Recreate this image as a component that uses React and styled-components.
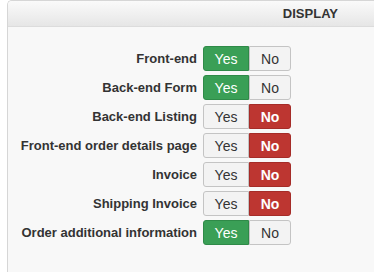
import React from 'react'
import styled, { createGlobalStyle } from 'styled-components'

const GlobalStyle = createGlobalStyle`
  html, body {
    margin: 0;
    padding: 0;
    background: #fff;
    overflow: hidden;
  }
  body {
    font-family: "Liberation Sans", Arial, sans-serif;
    color: #333;
  }
`

const Panel = styled.div`
  margin-left: 7px;
  margin-right: -12px;
  height: 272px;
  border: 1px solid #d6d6d6;
  border-right: none;
  border-bottom: none;
  border-top-left-radius: 5px;
  background: #f8f8f8;
  overflow: hidden;
`

const Header = styled.div`
  display: flex;
  justify-content: flex-end;
  align-items: center;
  height: 25px;
  padding-right: 48px;
  background: linear-gradient(to bottom, #fafafa, #e6e6e6);
  border-bottom: 1px solid #dcdcdc;
  font-size: 13px;
  font-weight: bold;
  color: #333;
`

const Form = styled.div`
  display: grid;
  grid-template-columns: 189px auto;
  column-gap: 6px;
  row-gap: 4px;
  align-items: center;
  justify-content: start;
  padding-top: 19px;
`

const Label = styled.div`
  text-align: right;
  font-size: 13px;
  font-weight: bold;
  color: #333;
  white-space: nowrap;
`

const Toggle = styled.div`
  display: flex;
  height: 25px;
`

const Option = styled.div`
  display: flex;
  align-items: center;
  justify-content: center;
  box-sizing: border-box;
  width: ${p => p.$w}px;
  font-size: 14px;
  font-weight: ${p => (p.$tone === 'red' ? 'bold' : 'normal')};
  color: ${p => (p.$tone ? '#fff' : '#333')};
  background: ${p =>
    p.$tone === 'green' ? '#3a9f56' : p.$tone === 'red' ? '#bd3631' : '#f3f3f3'};
  border: 1px solid
    ${p => (p.$tone === 'green' ? '#2f8a48' : p.$tone === 'red' ? '#a52c28' : '#c4c4c4')};
  &:first-child {
    border-radius: 3px 0 0 3px;
  }
  &:last-child {
    border-radius: 0 3px 3px 0;
  }
`

const rows = [
  ['Front-end', true],
  ['Back-end Form', true],
  ['Back-end Listing', false],
  ['Front-end order details page', false],
  ['Invoice', false],
  ['Shipping Invoice', false],
  ['Order additional information', true]
]

const App = () => {
  return (
    <>
      <GlobalStyle />
      <Panel>
        <Header>DISPLAY</Header>
        <Form>
          {rows.map(([label, on]) => (
            <React.Fragment key={label}>
              <Label>{label}</Label>
              <Toggle>
                <Option $w={46} $tone={on ? 'green' : null}>Yes</Option>
                <Option $w={42} $tone={on ? null : 'red'}>No</Option>
              </Toggle>
            </React.Fragment>
          ))}
        </Form>
      </Panel>
    </>
  )
}

export default App
